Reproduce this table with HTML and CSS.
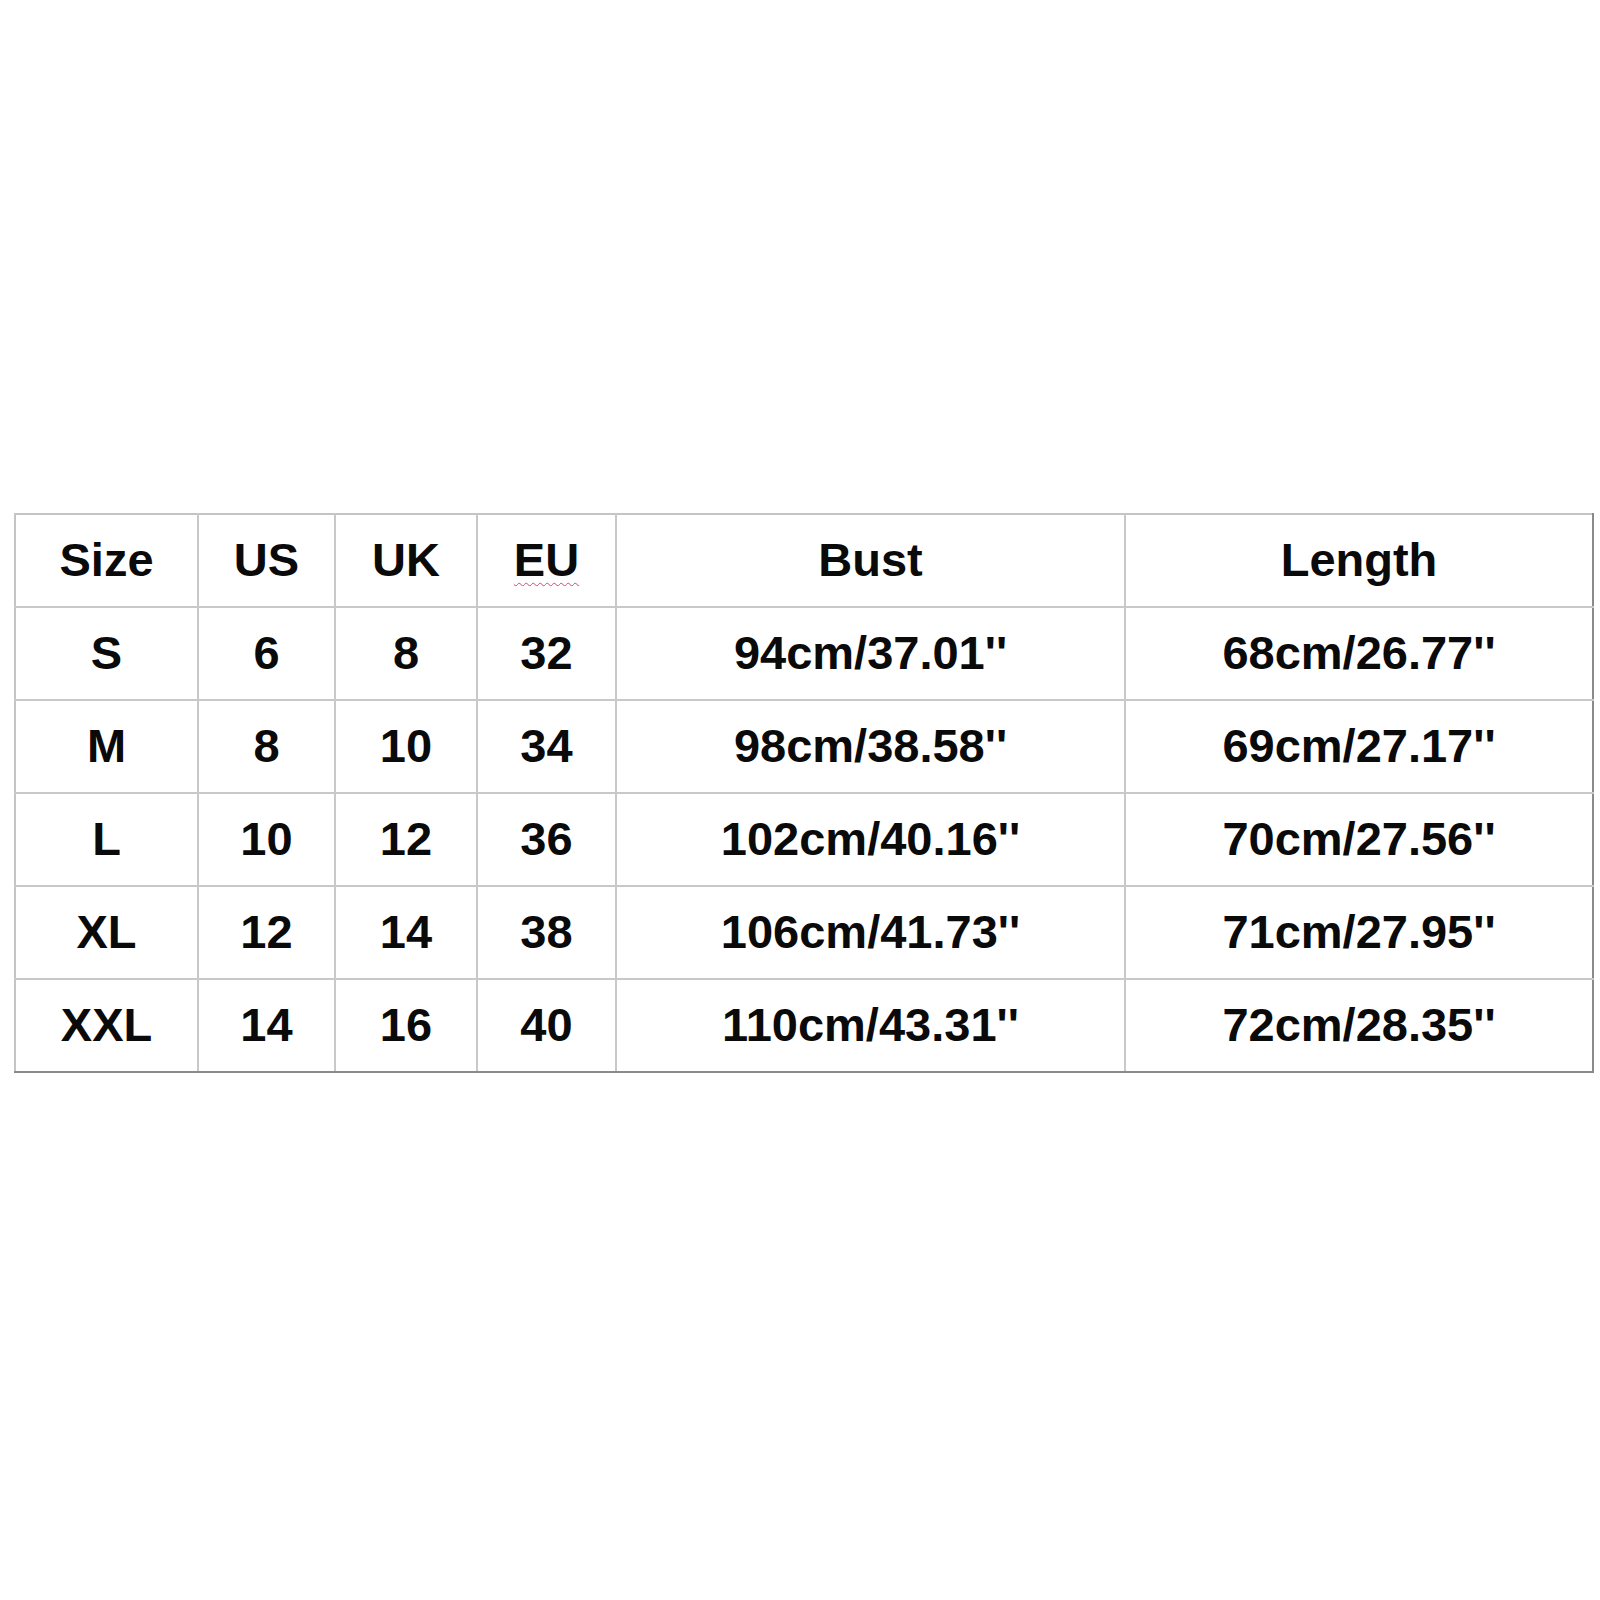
FILE: index.html
```html
<!DOCTYPE html>
<html>
<head>
<meta charset="utf-8">
<link rel="stylesheet" href="styles.css">
</head>
<body>
<div class="page">
  <table class="chart">
    <colgroup>
      <col class="c1"><col class="c2"><col class="c3"><col class="c4"><col class="c5"><col class="c6">
    </colgroup>
    <tr><td>Size</td><td>US</td><td>UK</td><td><span class="squiggle">EU</span></td><td>Bust</td><td>Length</td></tr>
    <tr><td>S</td><td>6</td><td>8</td><td>32</td><td>94cm/37.01''</td><td>68cm/26.77''</td></tr>
    <tr><td>M</td><td>8</td><td>10</td><td>34</td><td>98cm/38.58''</td><td>69cm/27.17''</td></tr>
    <tr><td>L</td><td>10</td><td>12</td><td>36</td><td>102cm/40.16''</td><td>70cm/27.56''</td></tr>
    <tr><td>XL</td><td>12</td><td>14</td><td>38</td><td>106cm/41.73''</td><td>71cm/27.95''</td></tr>
    <tr><td>XXL</td><td>14</td><td>16</td><td>40</td><td>110cm/43.31''</td><td>72cm/28.35''</td></tr>
  </table>
</div>
</body>
</html>
```

FILE: styles.css
```css
html, body {
  margin: 0;
  padding: 0;
  background: #ffffff;
}

.page {
  width: 1600px;
  height: 1600px;
  padding-top: 513px;
  padding-left: 14px;
  box-sizing: border-box;
}

.chart {
  border-collapse: collapse;
  table-layout: fixed;
  width: 1578px;
  font-family: "Liberation Sans", Arial, sans-serif;
  font-weight: bold;
  font-size: 47px;
  color: #0a0a0a;
  border-top: 2px solid #c4c4c4;
  border-left: 2px solid #c4c4c4;
  border-right: 2px solid #8a8a8a;
  border-bottom: 2px solid #8a8a8a;
}

.c1 { width: 183px; }
.c2 { width: 137px; }
.c3 { width: 142px; }
.c4 { width: 139px; }
.c5 { width: 509px; }
.c6 { width: 468px; }

.chart td {
  height: 88px;
  padding: 0 0 3px 0;
  text-align: center;
  vertical-align: middle;
  line-height: 1;
  border: 2px solid #c8c8c8;
}

.chart tr:first-child td { border-top-color: #c4c4c4; }
.chart td:first-child { border-left-color: #c4c4c4; }
.chart td:last-child { border-right-color: #8a8a8a; }
.chart tr:last-child td { border-bottom-color: #8a8a8a; }

.squiggle {
  text-decoration: underline wavy #d04a6a;
  text-decoration-thickness: 1px;
  text-underline-offset: 6px;
}
```
